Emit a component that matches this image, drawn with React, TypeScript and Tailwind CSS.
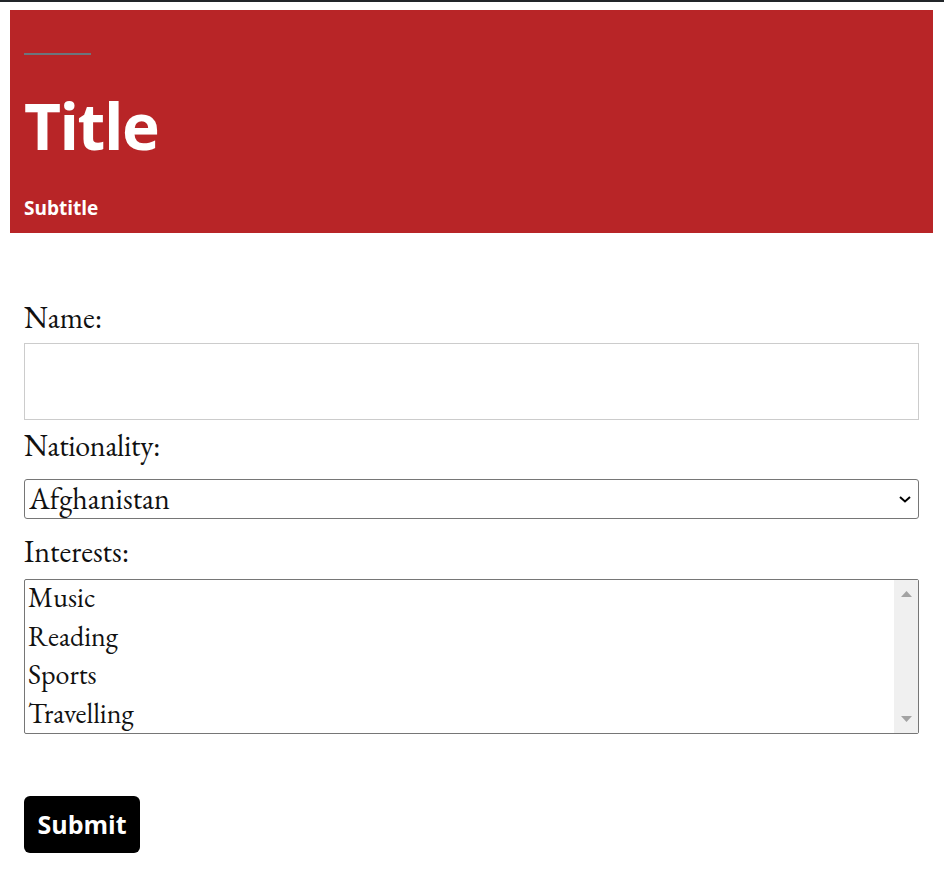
import { useState } from 'react';

const interests = ['Music', 'Reading', 'Sports', 'Travelling'];

const serif = "font-['EB_Garamond','Liberation_Serif',serif]";
const sans = "font-['Open_Sans','Noto_Sans',sans-serif]";

const App = () => {
  const [name, setName] = useState('');
  const [country, setCountry] = useState('Afghanistan');
  const [picked, setPicked] = useState<string[]>([]);

  const toggle = (item: string) =>
    setPicked((prev) => (prev.includes(item) ? prev.filter((p) => p !== item) : [...prev, item]));

  return (
    <div className="min-h-[871px] bg-white">
      <div className="h-[2px] bg-[#212529]" />
      <div className="px-[10px] pt-[8px] pr-[11px]">
        <header className={`${sans} bg-[#b82527] px-[14px] h-[223px] pt-[43px]`}>
          <div className="h-[2px] w-[67px] bg-[#6c757d]" />
          <h1 className="mt-[38px] text-[64px] leading-[66px] font-bold text-white tracking-[-1.5px]">Title</h1>
          <p className="mt-[37px] text-[19px] leading-[24px] font-bold text-white">Subtitle</p>
        </header>

        <form className={`${serif} px-[14px] text-[#111]`} onSubmit={(e) => e.preventDefault()}>
          <label className="block mt-[67px] text-[30px] leading-[36px]">Name:</label>
          <input
            value={name}
            onChange={(e) => setName(e.target.value)}
            className="block mt-[7px] w-full h-[77px] border border-[#cccccc] px-2 text-[28px] outline-none"
          />

          <label className="block mt-[8px] text-[30px] leading-[36px] tracking-[-0.3px]">Nationality:</label>
          <div className="relative mt-[15px]">
            <select
              value={country}
              onChange={(e) => setCountry(e.target.value)}
              className="block w-full h-[40px] appearance-none rounded-[3px] border border-[#767676] bg-white pl-[4px] text-[30px] leading-[38px] outline-none"
            >
              <option>Afghanistan</option>
              <option>Albania</option>
              <option>Algeria</option>
            </select>
            <svg
              className="pointer-events-none absolute right-[8px] top-[17px]"
              width="12"
              height="7"
              viewBox="0 0 12 7"
              fill="none"
            >
              <path d="M1 1l5 4.5L11 1" stroke="#000" strokeWidth="2" />
            </svg>
          </div>

          <label className="block mt-[15px] text-[30px] leading-[36px]">Interests:</label>
          <div className="mt-[9px] flex h-[155px] rounded-[2px] border border-[#767676]">
            <div className="flex-1 pl-[3px]">
              {interests.map((item) => (
                <div
                  key={item}
                  onClick={() => toggle(item)}
                  className={`h-[38.6px] text-[28px] leading-[35px] cursor-default ${
                    picked.includes(item) ? 'bg-[#cecece]' : ''
                  }`}
                >
                  {item}
                </div>
              ))}
            </div>
            <div className="w-[24px] bg-[#f0f0f0] flex flex-col items-center justify-between py-[11px]">
              <svg width="11" height="6" viewBox="0 0 11 6">
                <path d="M5.5 0L11 6H0z" fill="#a3a3a3" />
              </svg>
              <svg width="11" height="6" viewBox="0 0 11 6">
                <path d="M0 0h11L5.5 6z" fill="#a3a3a3" />
              </svg>
            </div>
          </div>

          <button
            type="submit"
            className={`${sans} mt-[62px] h-[57px] w-[116px] rounded-[6px] bg-black text-white text-[25px] font-bold`}
          >
            Submit
          </button>
        </form>
      </div>
    </div>
  );
};

export default App;
